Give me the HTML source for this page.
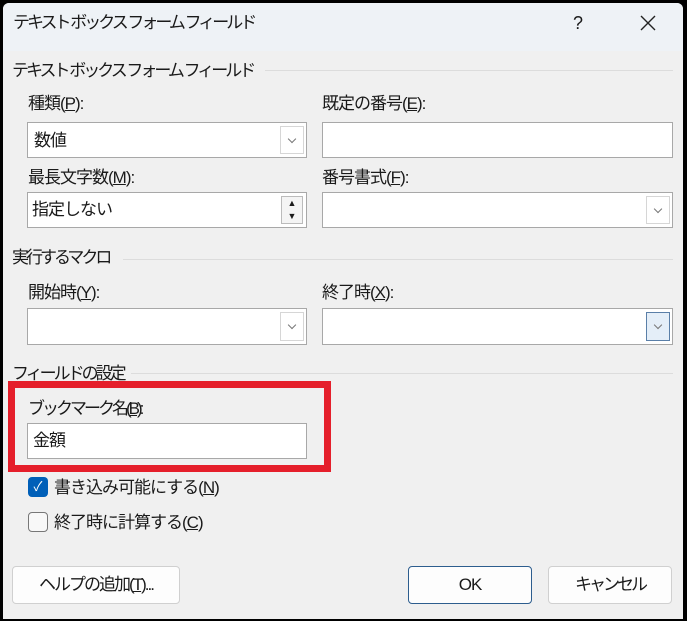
<!DOCTYPE html>
<html><head><meta charset="utf-8"><style>
*{box-sizing:border-box;margin:0;padding:0}
body{width:687px;height:621px;background:#000;font-family:"Liberation Sans","Noto Sans CJK JP",sans-serif;font-size:17px;color:#1a1a1a;position:relative;overflow:hidden}
#win{position:absolute;left:3px;top:3px;width:680px;height:616px;background:#f0f0f0;border-radius:6px 6px 0 0;overflow:hidden}
.tb{position:absolute;left:0;top:0;width:100%;height:48px;background:#eef2f6}
.a{position:absolute;white-space:nowrap;line-height:20px;letter-spacing:-1px}
.k{letter-spacing:-3px}
.line{position:absolute;height:1px;background:#dcdcdc}
.box{position:absolute;background:#fff;border:1px solid #a8a8a8}
.dd{position:absolute;right:2px;top:3px;bottom:3px;width:24px;border:1px solid #d6d6d6;background:#fff}
.dd:after{content:"";position:absolute;left:8px;top:9px;width:5px;height:5px;border-right:1px solid #777;border-bottom:1px solid #777;transform:rotate(45deg)}
.btn{position:absolute;background:#fdfdfd;border:1px solid #d0d0d0;border-radius:4px;text-align:center;line-height:36px;letter-spacing:-1px}
u{text-decoration:underline}
</style></head><body><div id="win">
<div class="tb"></div>
<div class="a k" style="left:10px;top:10px">テキスト ボックス フォーム フィールド</div>
<div class="a" style="left:570px;top:10px;font-size:18px">?</div>
<svg style="position:absolute;left:637px;top:12px" width="16" height="16"><path d="M1 1L15 15M15 1L1 15" stroke="#222" stroke-width="1.4"/></svg>

<div class="a k" style="left:9px;top:58px">テキスト ボックス フォーム フィールド</div>
<div class="line" style="left:262px;right:10px;top:67px"></div>
<div class="a" style="left:25px;top:91px">種類(<u>P</u>):</div>
<div class="box" style="left:24px;top:119px;width:280px;height:36px"><div class="a" style="left:6px;top:8px">数値</div><div class="dd"></div></div>
<div class="a" style="left:319px;top:91px">既定の番号(<u>E</u>):</div>
<div class="box" style="left:319px;top:119px;width:351px;height:36px"></div>
<div class="a" style="left:25px;top:165px">最長文字数(<u>M</u>):</div>
<div class="box" style="left:24px;top:189px;width:280px;height:36px"><div class="a" style="left:4px;top:7px">指定しない</div>
<div style="position:absolute;right:3px;top:3px;width:22px;height:28px;border:1px solid #bbb;background:#f4f4f4;font-size:9px;line-height:13px;text-align:center">▲<br>▼</div></div>
<div class="a" style="left:319px;top:165px">番号書式(<u>F</u>):</div>
<div class="box" style="left:319px;top:189px;width:351px;height:36px"><div class="dd"></div></div>

<div class="a k" style="left:9px;top:245px">実行するマクロ</div>
<div class="line" style="left:120px;right:10px;top:256px"></div>
<div class="a" style="left:25px;top:280px">開始時(<u>Y</u>):</div>
<div class="box" style="left:24px;top:305px;width:280px;height:37px"><div class="dd"></div></div>
<div class="a" style="left:319px;top:280px">終了時(<u>X</u>):</div>
<div class="box" style="left:319px;top:305px;width:351px;height:37px"><div class="dd" style="border-color:#5a7fa8;background:#e4eef8"></div></div>

<div class="a k" style="left:9px;top:361px">フィールドの設定</div>
<div class="line" style="left:128px;right:10px;top:370px"></div>
<div style="position:absolute;left:5px;top:378px;width:323px;height:91px;border:7px solid #e51f2b"></div>
<div class="a k" style="left:25px;top:396px">ブックマーク名(<u>B</u>):</div>
<div class="box" style="left:24px;top:420px;width:280px;height:36px"><div class="a" style="left:5px;top:7px">金額</div></div>

<div style="position:absolute;left:25px;top:474px;width:20px;height:20px;border-radius:4px;background:#005fb8;color:#fff;font-size:13px;text-align:center;line-height:20px">✓</div>
<div class="a" style="left:51px;top:475px">書き込み可能にする(<u>N</u>)</div>
<div style="position:absolute;left:25px;top:509px;width:20px;height:20px;border-radius:4px;border:1px solid #777;background:#f8f8f8"></div>
<div class="a" style="left:51px;top:510px">終了時に計算する(<u>C</u>)</div>

<div class="btn" style="left:9px;top:563px;width:168px;height:38px;letter-spacing:-2px">ヘルプの追加(<u>T</u>)...</div>
<div class="btn" style="left:405px;top:563px;width:124px;height:38px;border-color:#2d5d8e">OK</div>
<div class="btn" style="left:545px;top:563px;width:124px;height:38px;letter-spacing:-3px">キャンセル</div>
</div></body></html>
